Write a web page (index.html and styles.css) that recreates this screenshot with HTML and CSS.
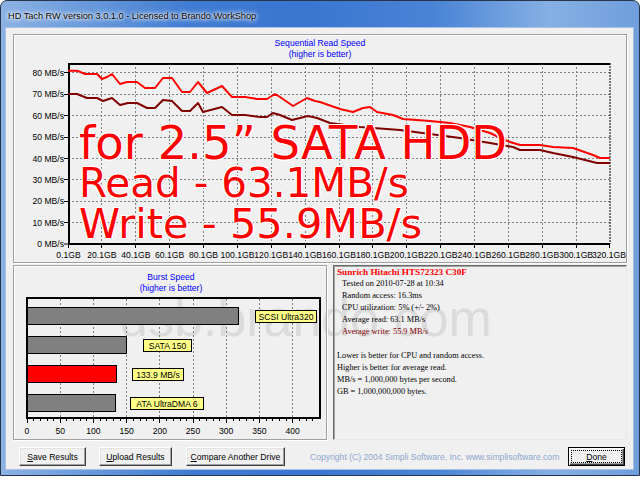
FILE: index.html
```html
<!DOCTYPE html>
<html>
<head>
<meta charset="utf-8">
<title>HD Tach RW</title>
<link rel="stylesheet" href="styles.css">
</head>
<body>
<div class="window">
  <div class="titlebar"><span class="title">HD Tach RW version 3.0.1.0 - Licensed to Brando WorkShop</span></div>
  <div class="client">
    <div class="panel seq">
      <svg class="chart" width="612" height="227" viewBox="14 35 612 227">
        <text class="ctitle" x="320" y="46">Sequential Read Speed</text>
        <text class="ctitle" x="320" y="57">(higher is better)</text>
        <path class="grid" d="M68 72.5H610M68 94.5H610M68 115.5H610M68 137.5H610M68 158.5H610M68 179.5H610M68 201.5H610M68 222.5H610M101.5 63V244M135.5 63V244M169.5 63V244M203.5 63V244M237.5 63V244M271.5 63V244M305.5 63V244M339.5 63V244M372.5 63V244M406.5 63V244M440.5 63V244M474.5 63V244M508.5 63V244M542.5 63V244M576.5 63V244"/>
        <path class="frame-r" d="M610 63V244"/>
        <path class="frame" d="M68 64H610M69 63V245M68 244H610"/>
        <path class="ticks" d="M64 72.5H68M64 94.5H68M64 115.5H68M64 137.5H68M64 158.5H68M64 179.5H68M64 201.5H68M64 222.5H68M64 244H68M68.5 244V248M101.5 244V248M135.5 244V248M169.5 244V248M203.5 244V248M237.5 244V248M271.5 244V248M305.5 244V248M339.5 244V248M372.5 244V248M406.5 244V248M440.5 244V248M474.5 244V248M508.5 244V248M542.5 244V248M576.5 244V248M609.5 244V248"/>
        <g class="ylab">
          <text x="64" y="75.9">80 MB/s</text>
          <text x="64" y="97.3">70 MB/s</text>
          <text x="64" y="118.7">60 MB/s</text>
          <text x="64" y="140.1">50 MB/s</text>
          <text x="64" y="161.5">40 MB/s</text>
          <text x="64" y="182.9">30 MB/s</text>
          <text x="64" y="204.3">20 MB/s</text>
          <text x="64" y="225.7">10 MB/s</text>
          <text x="64" y="247.1">0 MB/s</text>
        </g>
        <g class="xlab">
          <text x="68.5" y="258">0.1GB</text>
          <text x="101.9" y="258">20.1GB</text>
          <text x="135.8" y="258">40.1GB</text>
          <text x="169.6" y="258">60.1GB</text>
          <text x="203.5" y="258">80.1GB</text>
          <text x="237.4" y="258">100.1GB</text>
          <text x="271.3" y="258">120.1GB</text>
          <text x="305.1" y="258">140.1GB</text>
          <text x="339" y="258">160.1GB</text>
          <text x="372.9" y="258">180.1GB</text>
          <text x="406.8" y="258">200.1GB</text>
          <text x="440.6" y="258">220.1GB</text>
          <text x="474.5" y="258">240.1GB</text>
          <text x="508.4" y="258">260.1GB</text>
          <text x="542.3" y="258">280.1GB</text>
          <text x="576.1" y="258">300.1GB</text>
          <text x="609" y="258">320.1GB</text>
        </g>
        <polyline class="write" points="68,94 77,94 87,98 97,98 103,101 112,98 120,105 128,103 137,103 147,108 155,108 163,100 172,101 182,111 190,111 198,103 203,112 222,107 232,115 245,115 260,117 267,117 273,113 280,115 292,120 308,116 317,118 330,123 360,127 400,130 430,134 460,138 490,143 513,147 520,150 540,150 553,153 573,157 597,163 610,163"/>
        <polyline class="read" points="68,70.7 77,70.7 85,74 97,74 102,79 107,77 112,74 120,84 127,82 137,82 145,88 155,88 163,78 172,78 182,92 190,92 198,82 207,93 222,86 232,97 245,97 257,99 267,99 275,94 280,97 293,106 307,98 315,101 320,102 340,109 353,112 363,108 370,107 377,112 393,115 403,119 430,121 450,123 470,127 490,133 505,140 510,142 520,145 540,145 553,147 573,148 593,155 600,158 610,158"/>
      </svg>
      <div class="overlay">
        <div class="big1">for 2.5” SATA HDD</div>
        <div class="big2">Read - 63.1MB/s</div>
        <div class="big3">Write - 55.9MB/s</div>
      </div>
    </div>
    <div class="row">
      <div class="watermark">usb.brando.com</div>
      <div class="panel burst">
        <svg class="chart" width="312" height="173" viewBox="14 266 312 173">
          <text class="ctitle" x="171" y="280">Burst Speed</text>
          <text class="ctitle" x="171" y="291">(higher is better)</text>
          <path class="grid" d="M60.5 299V417M93.5 299V417M126.5 299V417M159.5 299V417M193.5 299V417M226.5 299V417M259.5 299V417M292.5 299V417"/>
          <path class="ticks" d="M33.5 418V421M40.5 418V421M47.5 418V421M53.5 418V421M66.5 418V421M73.5 418V421M80.5 418V421M86.5 418V421M100.5 418V421M106.5 418V421M113.5 418V421M120.5 418V421M133.5 418V421M140.5 418V421M146.5 418V421M153.5 418V421M166.5 418V421M173.5 418V421M180.5 418V421M186.5 418V421M199.5 418V421M206.5 418V421M213.5 418V421M219.5 418V421M233.5 418V421M239.5 418V421M246.5 418V421M253.5 418V421M266.5 418V421M272.5 418V421M279.5 418V421M286.5 418V421M299.5 418V421M306.5 418V421M312.5 418V421M27.5 418V423M60.5 418V423M93.5 418V423M126.5 418V423M159.5 418V423M193.5 418V423M226.5 418V423M259.5 418V423M292.5 418V423"/>
          <rect class="bar" x="27.5" y="307.5" width="211" height="17"/>
          <rect class="bar" x="27.5" y="336.5" width="99" height="17"/>
          <rect class="bar red" x="27.5" y="365.5" width="89" height="17"/>
          <rect class="bar" x="27.5" y="394.5" width="88" height="17"/>
          <rect class="plot" x="27" y="298" width="293" height="120"/>
          <rect class="tag" x="255.5" y="310.5" width="61" height="12"/>
          <text class="tagtext" x="286" y="319.6">SCSI Ultra320</text>
          <rect class="tag" x="143.5" y="339.5" width="48" height="12"/>
          <text class="tagtext" x="167.5" y="348.6">SATA 150</text>
          <rect class="tag" x="132.5" y="368.5" width="51" height="12"/>
          <text class="tagtext" x="158" y="377.6">133.9 MB/s</text>
          <rect class="tag" x="130.5" y="397.5" width="73" height="12"/>
          <text class="tagtext" x="167" y="406.6">ATA UltraDMA 6</text>
          <g class="xlab">
            <text x="27" y="434">0</text>
            <text x="60.2" y="434">50</text>
            <text x="93.4" y="434">100</text>
            <text x="126.6" y="434">150</text>
            <text x="159.8" y="434">200</text>
            <text x="193" y="434">250</text>
            <text x="226.2" y="434">300</text>
            <text x="259.4" y="434">350</text>
            <text x="292.6" y="434">400</text>
          </g>
        </svg>
      </div>
      <div class="panel info">
        <div class="drive">Sunrich Hitachi HTS72323 C30F</div>
        <div class="ind">Tested on 2010-07-28 at 10:34</div>
        <div class="ind">Random access: 16.3ms</div>
        <div class="ind">CPU utilization: 5% (+/- 2%)</div>
        <div class="ind">Average read: 63.1 MB/s</div>
        <div class="ind wr">Average write: 55.9 MB/s</div>
        <div class="gap"></div>
        <div>Lower is better for CPU and random access.</div>
        <div>Higher is better for average read.</div>
        <div>MB/s = 1,000,000 bytes per second.</div>
        <div>GB = 1,000,000,000 bytes.</div>
      </div>
    </div>
    <div class="buttons">
      <div class="btn b-save"><u>S</u>ave Results</div>
      <div class="btn b-upload"><u>U</u>pload Results</div>
      <div class="btn b-compare"><u>C</u>ompare Another Drive</div>
      <div class="copy">Copyright (C) 2004 Simpli Software, Inc. www.simplisoftware.com</div>
      <div class="btn b-done"><span class="focus"><u>D</u>one</span></div>
    </div>
  </div>
</div>
</body>
</html>
```

FILE: styles.css
```css
* { box-sizing: border-box; }
html, body { margin: 0; padding: 0; background: #ffffff; }
body {
  width: 640px;
  height: 480px;
  overflow: hidden;
  font-family: "Liberation Sans", Arial, sans-serif;
}
.window {
  width: 640px;
  height: 476px;
  border: 1px solid #27344a;
  border-radius: 7px 7px 0 0;
  background: linear-gradient(to right, #8cb2e4 0%, #6c9cdc 12%, #3f7bd2 30%, #3a76d0 48%, #4a84d6 68%, #86b0e4 86%, #6f9edc 100%);
  padding: 0 6px 6px 5px;
  display: flex;
  flex-direction: column;
}
.titlebar {
  height: 27px;
  flex: none;
  display: flex;
  align-items: center;
  padding-left: 2px;
  padding-top: 2px;
}
.title {
  font-size: 9.2px;
  color: #000;
  text-shadow: 0 0 6px #fff, 0 0 4px #fff, 0 0 2px #fff;
}
.client {
  height: 441px;
  flex: none;
  background: #f0f0f0;
  box-shadow: 0 0 0 1px #a9c1e4;
  padding: 6px 6px 0 7px;
  display: flex;
  flex-direction: column;
}
.panel {
  border: 1px solid #a0a0a0;
  box-shadow: inset 1px 1px 0 #ffffff, 1px 1px 0 #ffffff;
  position: relative;
}
.seq { width: 614px; height: 229px; flex: none; }
.chart { display: block; }
.ctitle {
  font-family: "Liberation Sans", Arial, sans-serif;
  font-size: 8.6px;
  fill: #0000ff;
  text-anchor: middle;
}
.grid { stroke: #808080; stroke-width: 1; stroke-dasharray: 2 2; fill: none; }
.frame { stroke: #000; stroke-width: 2; fill: none; }
.frame-r { stroke: #000; stroke-width: 1; stroke-dasharray: 2 1; fill: none; }
.ticks { stroke: #000; stroke-width: 1; fill: none; }
.ylab text {
  font-family: "Liberation Sans", Arial, sans-serif;
  font-size: 8.6px;
  fill: #000;
  text-anchor: end;
}
.xlab text {
  font-family: "Liberation Sans", Arial, sans-serif;
  font-size: 8.6px;
  fill: #000;
  text-anchor: middle;
}
.read { fill: none; stroke: #ff0000; stroke-width: 2; stroke-linejoin: round; }
.write { fill: none; stroke: #800000; stroke-width: 2; stroke-linejoin: round; }
.overlay {
  position: absolute;
  left: 65px;
  top: 88px;
  font-family: "DejaVu Sans", Verdana, sans-serif;
  color: #ff0000;
  white-space: nowrap;
  text-shadow: -1px -1px 0 #fff, 1px -1px 0 #fff, -1px 1px 0 #fff, 1px 1px 0 #fff, 0 -1px 0 #fff, 0 1px 0 #fff, -1px 0 0 #fff, 1px 0 0 #fff;
}
.big1 { font-size: 46.5px; line-height: 40px; }
.big2 { font-size: 40.5px; line-height: 40.5px; }
.big3 { font-size: 41.5px; line-height: 40.5px; }
.row {
  margin-top: 2px;
  height: 175px;
  flex: none;
  display: flex;
  gap: 6px;
  position: relative;
}
.watermark {
  position: absolute;
  left: 106px;
  top: 27px;
  font-family: "Liberation Sans", Arial, sans-serif;
  font-size: 52px;
  line-height: 52px;
  color: #dbdbdb;
  white-space: nowrap;
  z-index: 0;
}
.burst { width: 314px; height: 175px; z-index: 1; }
.bar { fill: #808080; stroke: #000; stroke-width: 1; }
.bar.red { fill: #ff0000; }
.plot { fill: none; stroke: #000; stroke-width: 2; }
.tag { fill: #ffff88; stroke: #000; stroke-width: 1; }
.tagtext {
  font-family: "Liberation Sans", Arial, sans-serif;
  font-size: 8.6px;
  fill: #000;
  text-anchor: middle;
}
.info {
  width: 294px;
  height: 175px;
  z-index: 1;
  border-color: #6a6a6a #e8e8e8 #e8e8e8 #6a6a6a;
  box-shadow: inset 1px 1px 0 #a0a0a0;
  padding: 0 0 0 3px;
  font-family: "Liberation Serif", "Times New Roman", serif;
  font-size: 8.3px;
  line-height: 12px;
  color: #000;
}
.drive { color: #ff0000; font-weight: bold; font-size: 9.2px; }
.ind { padding-left: 5px; }
.wr { color: #800000; }
.gap { height: 12px; }
.buttons {
  margin-top: 7px;
  height: 19px;
  flex: none;
  display: flex;
  align-items: center;
}
.btn {
  height: 19px;
  border: 1px solid;
  border-color: #ffffff #404040 #404040 #ffffff;
  box-shadow: inset -1px -1px 0 #a0a0a0, inset 1px 1px 0 #e3e3e3;
  background: #f0f0f0;
  font-size: 8.6px;
  color: #000;
  display: flex;
  align-items: center;
  justify-content: center;
  flex: none;
}
.b-save { margin-left: 6px; width: 67px; }
.b-upload { margin-left: 13px; width: 73px; }
.b-compare { margin-left: 14px; width: 99px; }
.copy {
  margin-left: 25px;
  font-size: 8.6px;
  color: #8ca6d0;
  white-space: nowrap;
}
.b-done {
  margin-left: auto;
  margin-right: 2px;
  width: 57px;
  border: 1px solid #000;
  box-shadow: inset 1px 1px 0 #ffffff, inset -1px -1px 0 #404040, inset -2px -2px 0 #a0a0a0;
  padding: 2px;
}
.focus {
  width: 100%;
  height: 100%;
  border: 1px dotted #000;
  display: flex;
  align-items: center;
  justify-content: center;
}
```
